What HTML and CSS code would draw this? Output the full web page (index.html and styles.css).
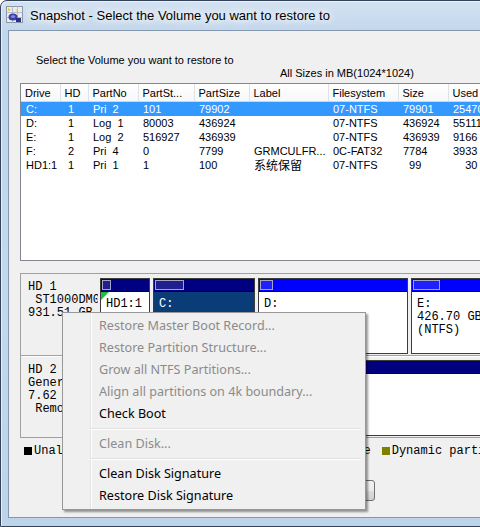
FILE: index.html
```html
<!DOCTYPE html>
<html lang="en">
<head>
    <meta charset="UTF-8">
    <meta name="viewport" content="width=device-width, initial-scale=1.0">
    <title>Snapshot - Select the Volume you want to restore to</title>
    <link rel="stylesheet" href="styles.css">
</head>
<body>
    <div class="window">
        <div class="titlebar">
            <svg class="app-icon" width="17" height="17" viewBox="0 0 17 17">
                <rect x="0.5" y="0.5" width="16" height="16" fill="#e9edf3" stroke="#8c96a8"/>
                <path d="M0.5 6.5h16M0.5 11.5h16M6.5 0.5v16M11.5 0.5v16" stroke="#b4bccb"/>
                <path d="M2 2l3 2-3 1z" fill="#f0c020"/>
                <path d="M8 1l2 3 2-2-1 4z" fill="#f7d23c"/>
                <ellipse cx="7" cy="11" rx="4.5" ry="3.5" fill="#3b3fa8"/>
                <ellipse cx="7" cy="10.5" rx="2.2" ry="1.6" fill="#7d86e0"/>
                <rect x="10" y="12" width="5" height="4" fill="#2a2f80"/>
            </svg>
            <span class="title">Snapshot - Select the Volume you want to restore to</span>
        </div>

        <div class="client">
            <div class="prompt">Select the Volume you want to restore to</div>
            <div class="units">All Sizes in MB(1024*1024)</div>

            <div class="list">
                <table class="volumes">
                    <colgroup>
                        <col style="width:39px"><col style="width:28px"><col style="width:50px">
                        <col style="width:56px"><col style="width:55px"><col style="width:79px">
                        <col style="width:70px"><col style="width:50px"><col style="width:60px">
                    </colgroup>
                    <thead>
                        <tr>
                            <th>Drive</th><th>HD</th><th>PartNo</th><th>PartSt...</th><th>PartSize</th>
                            <th>Label</th><th>Filesystem</th><th>Size</th><th>Used</th>
                        </tr>
                    </thead>
                    <tbody>
                        <tr class="selected">
                            <td>C:</td><td>&nbsp;1</td><td>Pri&nbsp; 2</td><td>101</td><td>79902</td>
                            <td></td><td>07-NTFS</td><td>79901</td><td>25470</td>
                        </tr>
                        <tr>
                            <td>D:</td><td>&nbsp;1</td><td>Log&nbsp; 1</td><td>80003</td><td>436924</td>
                            <td></td><td>07-NTFS</td><td>436924</td><td>55111</td>
                        </tr>
                        <tr>
                            <td>E:</td><td>&nbsp;1</td><td>Log&nbsp; 2</td><td>516927</td><td>436939</td>
                            <td></td><td>07-NTFS</td><td>436939</td><td>9166</td>
                        </tr>
                        <tr>
                            <td>F:</td><td>&nbsp;2</td><td>Pri&nbsp; 4</td><td>0</td><td>7799</td>
                            <td>GRMCULFR...</td><td>0C-FAT32</td><td>7784</td><td>3933</td>
                        </tr>
                        <tr>
                            <td>HD1:1</td><td>&nbsp;1</td><td>Pri&nbsp; 1</td><td>1</td><td>100</td>
                            <td class="cjk">系统保留</td><td>07-NTFS</td><td>&nbsp; 99</td><td>&nbsp; &nbsp; 30</td>
                        </tr>
                    </tbody>
                </table>
            </div>

            <div class="diskmap">
                <div class="disk">
                    <div class="disk-info">HD 1
 ST1000DM003
931.51 GB</div>
                    <div class="parts">
                        <div class="part pri active" style="width:50px">
                            <div class="bar"><div class="used" style="width:7px"></div></div>
                            <div class="part-body">HD1:1</div>
                        </div>
                        <div class="part pri selected" style="width:102px">
                            <div class="bar"><div class="used" style="width:27px"></div></div>
                            <div class="part-body">C:</div>
                        </div>
                        <div class="part log" style="width:150px">
                            <div class="bar"><div class="used" style="width:11px"></div></div>
                            <div class="part-body">D:</div>
                        </div>
                        <div class="part log grow">
                            <div class="bar"><div class="used" style="width:25px"></div></div>
                            <div class="part-body">E:
426.70 GB
(NTFS)</div>
                        </div>
                    </div>
                </div>
                <div class="disk">
                    <div class="disk-info">HD 2
Generic
7.62 GB
 Removable</div>
                    <div class="parts">
                        <div class="part pri grow">
                            <div class="bar"><div class="used" style="width:190px"></div></div>
                            <div class="part-body">F:
7.62 GB
(FAT32)</div>
                        </div>
                    </div>
                </div>
            </div>

            <div class="legend">
                <span class="key"><i class="swatch black"></i>Unallocated</span>
                <span class="key"><i class="swatch navy"></i>Primary</span>
                <span class="key"><i class="swatch blue"></i>Logical</span>
                <span class="key"><i class="swatch gray"></i>Hidden volume</span>
                <span class="key"><i class="swatch olive"></i>Dynamic partition</span>
            </div>

            <div class="actions">
                <button class="btn">Restore</button>
                <button class="btn">Cancel</button>
            </div>
        </div>

        <ul class="menu">
            <li class="disabled">Restore Master Boot Record...</li>
            <li class="disabled">Restore Partition Structure...</li>
            <li class="disabled">Grow all NTFS Partitions...</li>
            <li class="disabled">Align all partitions on 4k boundary...</li>
            <li>Check Boot</li>
            <li class="sep"></li>
            <li class="disabled">Clean Disk...</li>
            <li class="sep"></li>
            <li>Clean Disk Signature</li>
            <li>Restore Disk Signature</li>
        </ul>
    </div>
</body>
</html>
```

FILE: styles.css
```css
body {
    margin: 0;
    overflow: hidden;
    background: #fff;
    font-family: "Liberation Sans", Arial, sans-serif;
    color: #000;
}

/* window frame */
.window {
    position: relative;
    width: 560px;
    height: 527px;
    box-sizing: border-box;
    display: flex;
    flex-direction: column;
    border: 1px solid #34435a;
    border-radius: 7px 7px 0 0;
    background: linear-gradient(to bottom, #d3e2f1 0, #c3d7ec 30px, #c4d8ed 60%, #bcd3ea 100%);
    box-shadow: inset 1px 1px 0 #e6f0fa;
}
.titlebar {
    height: 29px;
    flex: none;
    display: flex;
    align-items: center;
    gap: 7px;
    padding-left: 5px;
}
.app-icon {
    flex: none;
    margin-top: -2px;
}
.title {
    font-size: 13px;
    margin-top: -1px;
    text-shadow: 0 0 6px #fff, 0 0 10px #fff, 0 0 14px #f4f8fc;
}
.client {
    flex: 1;
    margin: 0 7px 8px;
    border: 1px solid #8497ad;
    background: #f0f0f0;
    display: flex;
    flex-direction: column;
}

.prompt, .units {
    font-size: 11px;
    line-height: 13px;
}
.prompt {
    margin: 23px 0 0 27px;
}
.units {
    margin-left: 271px;
}

/* volume list */
.list {
    margin: 3px 0 0 11px;
    height: 176px;
    border: 1px solid #828790;
    background: #fff;
    overflow: hidden;
}
.volumes {
    border-collapse: collapse;
    table-layout: fixed;
    font-size: 11px;
}
.volumes th {
    height: 17px;
    padding: 0 0 0 4px;
    text-align: left;
    font-weight: normal;
    white-space: nowrap;
    background: linear-gradient(to bottom, #fff, #f6f7f9);
    border-right: 1px solid #dfe2e6;
    border-bottom: 1px solid #d5d5d5;
}
.volumes tbody tr:first-child td {
    border-top: 1px solid #fff;
}
.volumes td {
    height: 14px;
    padding: 0 0 0 5px;
    white-space: nowrap;
    overflow: hidden;
    line-height: 14px;
}
.volumes tr.selected td {
    background: #3399ff;
    color: #fff;
}
.volumes .cjk {
    font-family: "Noto Sans CJK SC", sans-serif;
    font-size: 12px;
}

/* disk map */
.diskmap {
    margin: 12px 0 0 11px;
    border: 1px solid #a0a0a0;
    font-family: "Liberation Mono", "DejaVu Sans Mono", monospace;
    font-size: 12px;
    line-height: 13px;
}
.disk {
    display: flex;
    height: 81px;
}
.disk:first-child {
    border-bottom: 1px solid #a0a0a0;
}
.disk + .disk {
    height: 80px;
    border-top: 1px solid #fff;
}
.disk-info {
    width: 70px;
    flex: none;
    padding: 7px 0 0 7px;
    white-space: pre;
    overflow: hidden;
}
.parts {
    flex: 1;
    display: flex;
    gap: 3px;
    margin-left: 2px;
    padding: 4px 0 1px;
    overflow: hidden;
}
.disk + .disk .parts {
    padding-top: 3px;
}
.part {
    flex: none;
    box-sizing: border-box;
    display: flex;
    flex-direction: column;
    border: 1px solid #3c3c3c;
    background: #fff;
}
.part.grow {
    flex: 1;
}
.bar {
    height: 10px;
    padding: 1px;
    border-bottom: 1px solid #000;
}
.pri .bar {
    background: #000080;
}
.log .bar {
    background: #0000ff;
}
.used {
    height: 8px;
    border: 1px solid #a4a4c4;
    background: rgba(255, 255, 255, 0.12);
}
.part-body {
    flex: 1;
    position: relative;
    padding: 6px 0 0 5px;
    white-space: pre;
    overflow: hidden;
}
.part.selected .part-body {
    background: #0a3c78;
    color: #fff;
}
/* active partition flag */
.part.active .part-body::before {
    content: "";
    position: absolute;
    left: 0;
    top: 0;
    border-top: 8px solid #1fc03a;
    border-right: 8px solid transparent;
}

/* legend */
.legend {
    display: flex;
    align-items: center;
    margin: 6px 0 0 15px;
    height: 13px;
    font-family: "Liberation Mono", "DejaVu Sans Mono", monospace;
    font-size: 12px;
    white-space: nowrap;
}
.key {
    display: flex;
    align-items: center;
    margin-right: 11px;
}
.swatch {
    width: 8px;
    height: 8px;
    margin-right: 2px;
}
.swatch.black { background: #000; }
.swatch.navy { background: #000080; }
.swatch.blue { background: #0000ff; }
.swatch.gray { background: #808080; }
.swatch.olive { background: #808000; }

.actions {
    display: flex;
    gap: 10px;
    margin: 23px 0 0 206px;
}
.btn {
    width: 75px;
    height: 21px;
    font-family: "Liberation Sans", Arial, sans-serif;
    font-size: 12px;
    border: 1px solid #707070;
    border-radius: 3px;
    background: linear-gradient(to bottom, #f2f2f2 0, #ebebeb 50%, #dddddd 51%, #cfcfcf 100%);
}

/* context menu */
.menu {
    position: absolute;
    left: 61px;
    top: 311px;
    width: 304px;
    box-sizing: border-box;
    margin: 0;
    padding: 2px;
    list-style: none;
    border: 1px solid #979797;
    background: linear-gradient(to right, transparent 27px, #e2e3e3 27px, #e2e3e3 28px, #fff 28px, #fff 29px, transparent 29px), #f0f0f0;
    box-shadow: 2px 2px 2px rgba(0, 0, 0, 0.4);
    font-family: "Noto Sans", sans-serif;
    font-size: 12.6px;
}
.menu li {
    height: 22px;
    line-height: 22px;
    padding-left: 34px;
    white-space: nowrap;
}
.menu li.disabled {
    color: #8b8b8b;
}
.menu li.sep {
    height: 1px;
    padding: 0;
    margin: 3px 2px 3px 25px;
    background: #e0e0e0;
    border-bottom: 1px solid #fff;
}
```
